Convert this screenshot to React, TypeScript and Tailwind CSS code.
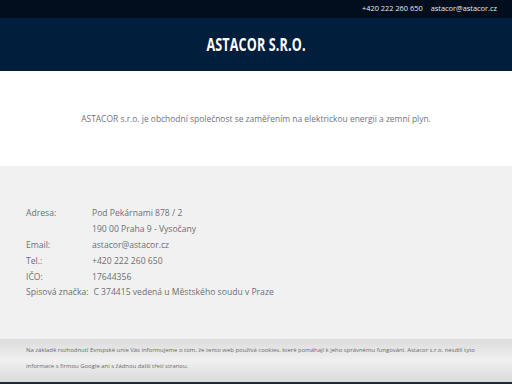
export default function App() {
  const rows = [
    { label: 'Adresa:', value: 'Pod Pekárnami 878 / 2' },
    { label: '', value: '190 00 Praha 9 - Vysočany' },
    { label: 'Email:', value: 'astacor@astacor.cz' },
    { label: 'Tel.:', value: '+420 222 260 650' },
    { label: 'IČO:', value: '17644356' },
  ];

  return (
    <div className="w-[512px] h-[384px] overflow-hidden flex flex-col font-['Open_Sans',sans-serif]">
      {/* top bar */}
      <div className="h-[18px] bg-[#020d1d] flex items-center justify-end pr-[15px] gap-[8px] text-[7.4px] text-[#e8ecf2]">
        <span>+420 222 260 650</span>
        <span>astacor@astacor.cz</span>
      </div>

      {/* header */}
      <div className="h-[53px] bg-[#011e3d] flex items-center justify-center">
        <h1 className="text-[17px] font-bold text-white scale-x-[0.74] tracking-[0.2px]">ASTACOR S.R.O.</h1>
      </div>

      {/* intro */}
      <div className="h-[95px] bg-white flex items-center justify-center">
        <p className="text-[8.45px] text-[#6f737a] pt-[2px]">
          ASTACOR s.r.o. je obchodní společnost se zaměřením na elektrickou energii a zemní plyn.
        </p>
      </div>

      {/* contacts */}
      <div className="h-[173px] bg-[#f1f1f1] pt-[40px] pl-[26px] text-[8.6px] text-[#6d6f73]">
        {rows.map((r, i) => (
          <div key={i} className="flex h-[15.8px] items-center">
            <span className="w-[66px]">{r.label}</span>
            <span>{r.value}</span>
          </div>
        ))}
        <div className="flex h-[15.8px] items-center">
          <span className="mr-[5px]">Spisová značka:</span>
          <span>C 374415 vedená u Městského soudu v Praze</span>
        </div>
      </div>

      {/* cookie bar */}
      <div className="h-[43px] bg-gradient-to-b from-[#dcdcdc] via-[#f0f0f0] to-[#dadada] pl-[26px] pt-[3px] text-[5.95px] text-[#6a6a6a] leading-[16px]">
        <p>
          Na základě rozhodnutí Evropské unie Vás informujeme o tom, že tento web používá cookies, které pomáhají k jeho správnému fungování. Astacor s.r.o. nesdílí tyto
        </p>
        <p>informace s firmou Google ani s žádnou další třetí stranou.</p>
      </div>
      <div className="flex-1 bg-[#1c2a3c]" />
    </div>
  );
}
